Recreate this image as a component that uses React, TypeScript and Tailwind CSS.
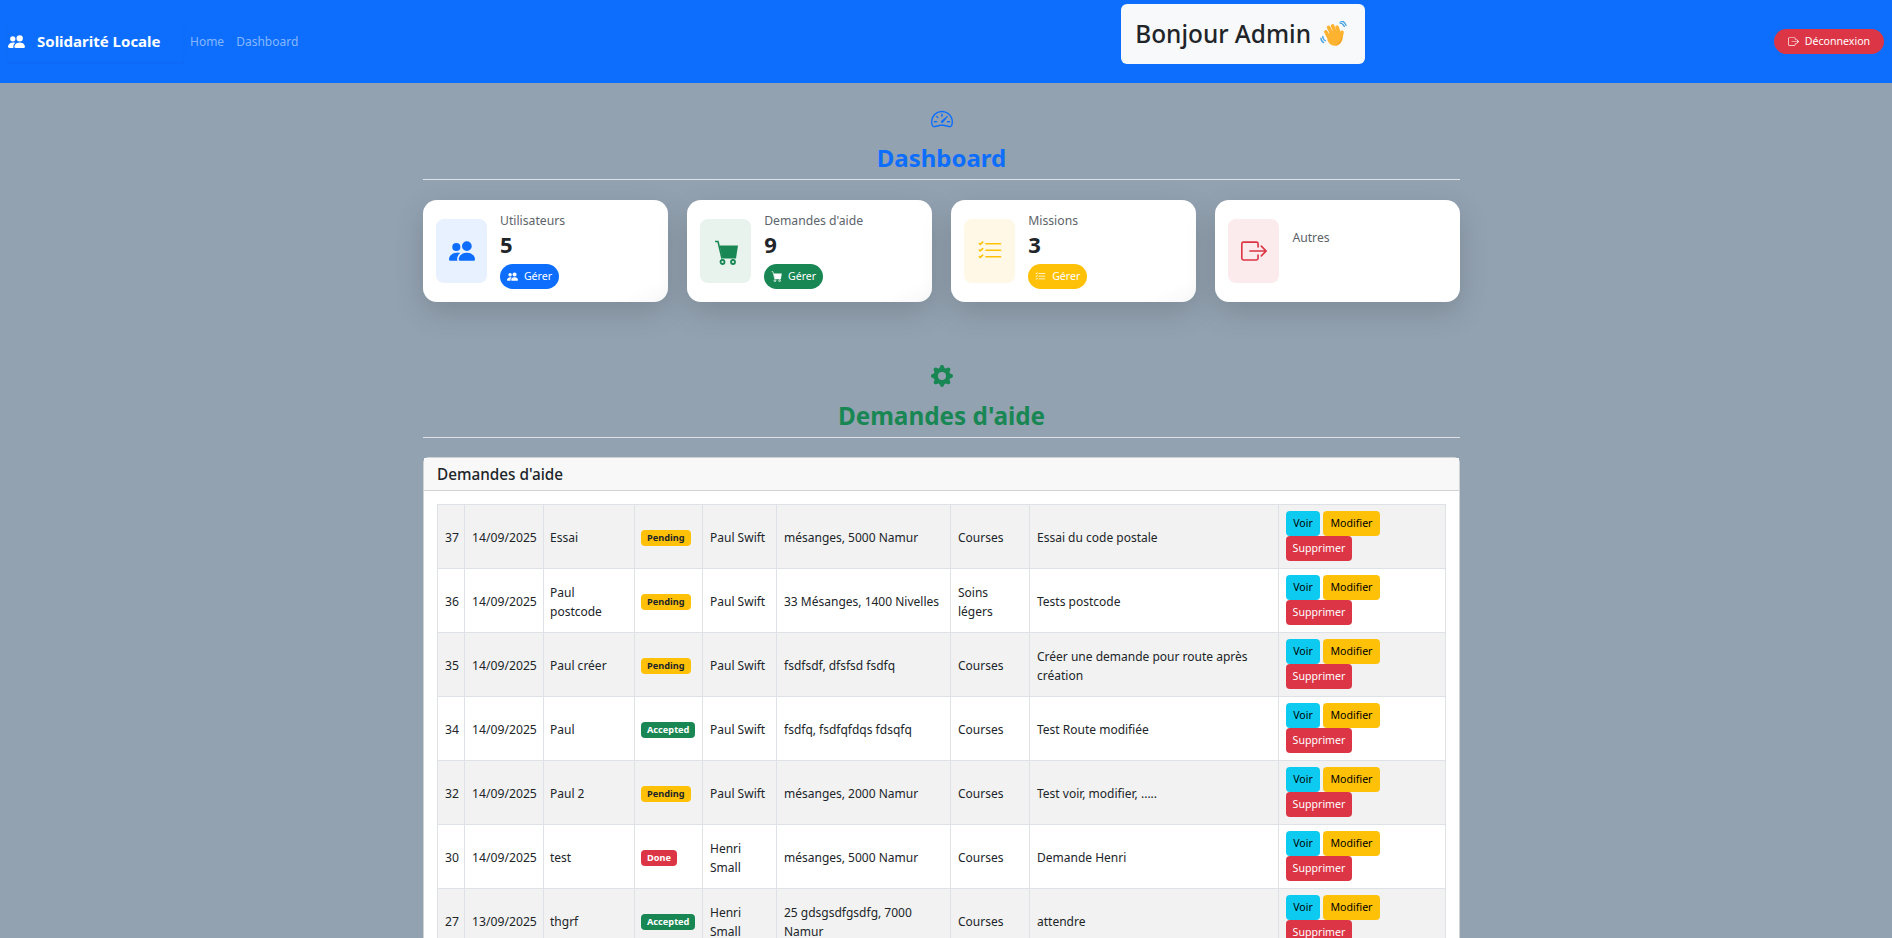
import React from 'react';
import {
  BsPeopleFill,
  BsListCheck,
  BsBoxArrowRight,
  BsSpeedometer2,
  BsGearFill,
} from 'react-icons/bs';

const font = { fontFamily: '"Noto Sans", "Segoe UI", sans-serif' };

interface Demande {
  id: number;
  date: string;
  titre: string;
  statut: 'Pending' | 'Accepted' | 'Done';
  nom: string;
  adresse: string;
  type: string;
  description: string;
}

const demandes: Demande[] = [
  { id: 37, date: '14/09/2025', titre: 'Essai', statut: 'Pending', nom: 'Paul Swift', adresse: 'mésanges, 5000 Namur', type: 'Courses', description: 'Essai du code postale' },
  { id: 36, date: '14/09/2025', titre: 'Paul postcode', statut: 'Pending', nom: 'Paul Swift', adresse: '33 Mésanges, 1400 Nivelles', type: 'Soins légers', description: 'Tests postcode' },
  { id: 35, date: '14/09/2025', titre: 'Paul créer', statut: 'Pending', nom: 'Paul Swift', adresse: 'fsdfsdf, dfsfsd fsdfq', type: 'Courses', description: 'Créer une demande pour route après création' },
  { id: 34, date: '14/09/2025', titre: 'Paul', statut: 'Accepted', nom: 'Paul Swift', adresse: 'fsdfq, fsdfqfdqs fdsqfq', type: 'Courses', description: 'Test Route modifiée' },
  { id: 32, date: '14/09/2025', titre: 'Paul 2', statut: 'Pending', nom: 'Paul Swift', adresse: 'mésanges, 2000 Namur', type: 'Courses', description: 'Test voir, modifier, .....' },
  { id: 30, date: '14/09/2025', titre: 'test', statut: 'Done', nom: 'Henri Small', adresse: 'mésanges, 5000 Namur', type: 'Courses', description: 'Demande Henri' },
  { id: 27, date: '13/09/2025', titre: 'thgrf', statut: 'Accepted', nom: 'Henri Small', adresse: '25 gdsgsdfgsdfg, 7000 Namur', type: 'Courses', description: 'attendre' },
];

const badgeClass = {
  Pending: 'bg-[#ffc107] text-[#212529]',
  Accepted: 'bg-[#198754] text-white',
  Done: 'bg-[#dc3545] text-white',
};

// no emoji font in the sandbox, so the waving hand is drawn
const WaveHand = () => (
  <svg viewBox="0 0 30 30" className="h-[27px] w-[27px]">
    <path d="M3 17c0 2 1 4 3 5M1 19c0 2 1 4 3 5M22 2c2 0 4 2 5 4M23 0c3 0 5 2 6 5" fill="none" stroke="#3f9fe0" strokeWidth="1.4" strokeLinecap="round" />
    <g fill="none" stroke="#fdb230" strokeWidth="4" strokeLinecap="round">
      <path d="M9 17 L6.5 12" />
      <path d="M13 14 L9.5 7" />
      <path d="M17 13 L14 5.5" />
      <path d="M21 13 L19 7" />
      <path d="M23 19 L24.5 12.5" />
    </g>
    <ellipse cx="16.5" cy="19" rx="8.5" ry="8.5" fill="#fdb230" />
    <path d="M24.5 16c.8 5-2.5 11-8 11.500 4-1.500 7-5.500 8-11.500z" fill="#f09a1c" />
  </svg>
);

const CartIcon = ({ className }: { className: string }) => (
  <svg viewBox="0 0 24 25" className={className}>
    <path d="M1 1.500h3l4 17" fill="none" stroke="currentColor" strokeWidth="1.600" />
    <path d="M5.500 5.500H24l-2 13H8.500z" fill="currentColor" />
    <circle cx="8.500" cy="22" r="2" fill="none" stroke="currentColor" strokeWidth="1.800" />
    <circle cx="19" cy="22" r="2" fill="none" stroke="currentColor" strokeWidth="1.800" />
  </svg>
);

function StatCard({ icon, iconClass, boxClass, label, value, btnClass, btnIcon }: {
  icon: React.ReactNode;
  iconClass: string;
  boxClass: string;
  label: string;
  value?: number;
  btnClass?: string;
  btnIcon?: React.ReactNode;
}) {
  const hasValue = value !== undefined;
  return (
    <div className={`flex h-[102px] items-center gap-[13px] rounded-[14px] px-[13px] shadow-[0_10px_30px_rgba(0,0,0,0.15)] ${hasValue ? 'bg-linear-to-br from-white from-[88%] to-[#f7f7f7]' : 'bg-white'}`}>
      <div className={`flex h-[64px] w-[51px] shrink-0 items-center justify-center rounded-lg text-[26px] ${boxClass} ${iconClass}`}>
        {icon}
      </div>
      <div className={`flex flex-col items-start self-start ${hasValue ? 'pt-[11px]' : 'pt-[28px]'}`}>
        <div className="text-[12.2px] leading-[19px] text-[#5c636a]">{label}</div>
        {hasValue && (
          <>
            <div className="text-[22px] font-bold leading-[29px] text-[#212529]">{value}</div>
            <button className={`mt-[5px] flex h-[25px] w-[59px] items-center justify-center gap-[6px] rounded-full text-[10.6px] text-white ${btnClass}`}>
              {btnIcon}
              Gérer
            </button>
          </>
        )}
      </div>
    </div>
  );
}

function ActionButton({ label, className }: { label: string; className: string }) {
  return (
    <button className={`flex h-[25px] items-center justify-center rounded-[4px] text-[10.6px] ${className}`}>
      {label}
    </button>
  );
}

export default function App() {
  return (
    <div className="h-screen overflow-hidden bg-[#93a2b1] text-[#212529]" style={font}>
      <nav className="flex h-[83px] items-center bg-[#0d6efd] pl-2 pr-2">
        <a className="flex h-[41px] w-[175px] items-center gap-3 text-[15px] font-bold text-white shadow-[0_1px_3px_rgba(0,0,0,0.05)]">
          <BsPeopleFill className="h-[17px] w-[17px]" />
          Solidarité Locale
        </a>
        <div className="ml-[7px] flex gap-[12px] text-[12px] text-[#86b7fe]">
          <a>Home</a>
          <a>Dashboard</a>
        </div>
        <div className="ml-[823px] mt-1 flex h-[60px] w-[244px] items-center gap-[9px] self-start rounded-md bg-[#f8f9fa] pl-[14px] text-[24.4px] font-medium text-[#212529]">
          Bonjour Admin
          <WaveHand />
        </div>
        <button className="ml-auto flex h-[25px] w-[110px] items-center justify-center gap-[6px] rounded-full bg-[#dc3545] text-[10.6px] text-white">
          <BsBoxArrowRight className="h-[11px] w-[11px]" />
          Déconnexion
        </button>
      </nav>

      <main className="ml-[423px] w-[1037px]">
        <div className="mt-[25px] flex flex-col items-center border-b border-[#dee2e6] pb-[2px]">
          <BsSpeedometer2 className="h-[22px] w-[22px] text-[#0d6efd]" />
          <h2 className="mt-[9px] text-[24px] font-bold leading-[38px] text-[#0d6efd]">Dashboard</h2>
        </div>

        <div className="mt-5 grid grid-cols-4 gap-[19.5px]">
          <StatCard icon={<BsPeopleFill />} iconClass="text-[#0d6efd]" boxClass="bg-[#e7f1ff]" label="Utilisateurs" value={5} btnClass="bg-[#0d6efd]" btnIcon={<BsPeopleFill className="h-[11px] w-[11px]" />} />
          <StatCard icon={<CartIcon className="mt-[3px] h-[25px] w-[24px]" />} iconClass="text-[#198754]" boxClass="bg-[#e8f3ee]" label="Demandes d'aide" value={9} btnClass="bg-[#198754]" btnIcon={<CartIcon className="h-[11px] w-[11px]" />} />
          <StatCard icon={<BsListCheck />} iconClass="text-[#ffc107]" boxClass="bg-[#fff8e6]" label="Missions" value={3} btnClass="bg-[#ffc107]" btnIcon={<BsListCheck className="h-[11px] w-[11px]" />} />
          <StatCard icon={<BsBoxArrowRight />} iconClass="text-[#dc3545]" boxClass="bg-[#fbebec]" label="Autres" />
        </div>

        <div className="mt-[63px] flex flex-col items-center border-b border-[#dee2e6] pb-[2px]">
          <BsGearFill className="h-[22px] w-[22px] text-[#198754]" />
          <h2 className="mt-[10px] text-[24.3px] font-bold leading-[38px] text-[#198754]">Demandes d'aide</h2>
        </div>

        <div className="mt-[19px] rounded-[6px] border border-[#d0d3d6] bg-white">
          <div className="flex h-[33px] items-center border-b border-[#d0d3d6] bg-[#f8f8f8] px-[13px] text-[15.3px] font-medium">
            Demandes d'aide
          </div>
          <div className="px-[13px] pt-[13px]">
            <table className="w-[1008px] table-fixed border-collapse text-[12px] leading-[19px] text-[#212529]">
              <colgroup>
                <col className="w-[27px]" />
                <col className="w-[79px]" />
                <col className="w-[91px]" />
                <col className="w-[68px]" />
                <col className="w-[74px]" />
                <col className="w-[174px]" />
                <col className="w-[79px]" />
                <col className="w-[249px]" />
                <col className="w-[167px]" />
              </colgroup>
              <tbody>
                {demandes.map((d, i) => (
                  <tr key={d.id} className={i % 2 === 0 ? 'h-[64px] bg-[#f2f2f2]' : 'h-[64px] bg-white'}>
                    <td className="border border-[#dee2e6] px-[7px] pt-[2px] text-[12.2px]">{d.id}</td>
                    <td className="border border-[#dee2e6] px-[7px] pt-[2px] text-[12.2px]">{d.date}</td>
                    <td className="border border-[#dee2e6] pl-[6px] pr-[7px] pt-[2px]">{d.titre}</td>
                    <td className="border border-[#dee2e6] px-[6px]">
                      <span className={`inline-flex h-4 items-center rounded-[4px] px-[6px] text-[9.2px] font-bold ${badgeClass[d.statut]}`}>
                        {d.statut}
                      </span>
                    </td>
                    <td className="border border-[#dee2e6] px-[7px] pt-[2px]">{d.nom}</td>
                    <td className="border border-[#dee2e6] px-[7px] pt-[2px]">{d.adresse}</td>
                    <td className="border border-[#dee2e6] px-[7px] pt-[2px]">{d.type}</td>
                    <td className="border border-[#dee2e6] px-[7px] pt-[2px]">{d.description}</td>
                    <td className="border border-[#dee2e6] px-[7px] pb-[2px]">
                      <div className="flex flex-wrap gap-x-[3px]">
                        <ActionButton label="Voir" className="w-[34px] bg-[#0dcaf0] text-black" />
                        <ActionButton label="Modifier" className="w-[57px] bg-[#ffc107] text-black" />
                        <ActionButton label="Supprimer" className="w-[66px] bg-[#dc3545] text-white" />
                      </div>
                    </td>
                  </tr>
                ))}
              </tbody>
            </table>
          </div>
        </div>
      </main>
    </div>
  );
}
